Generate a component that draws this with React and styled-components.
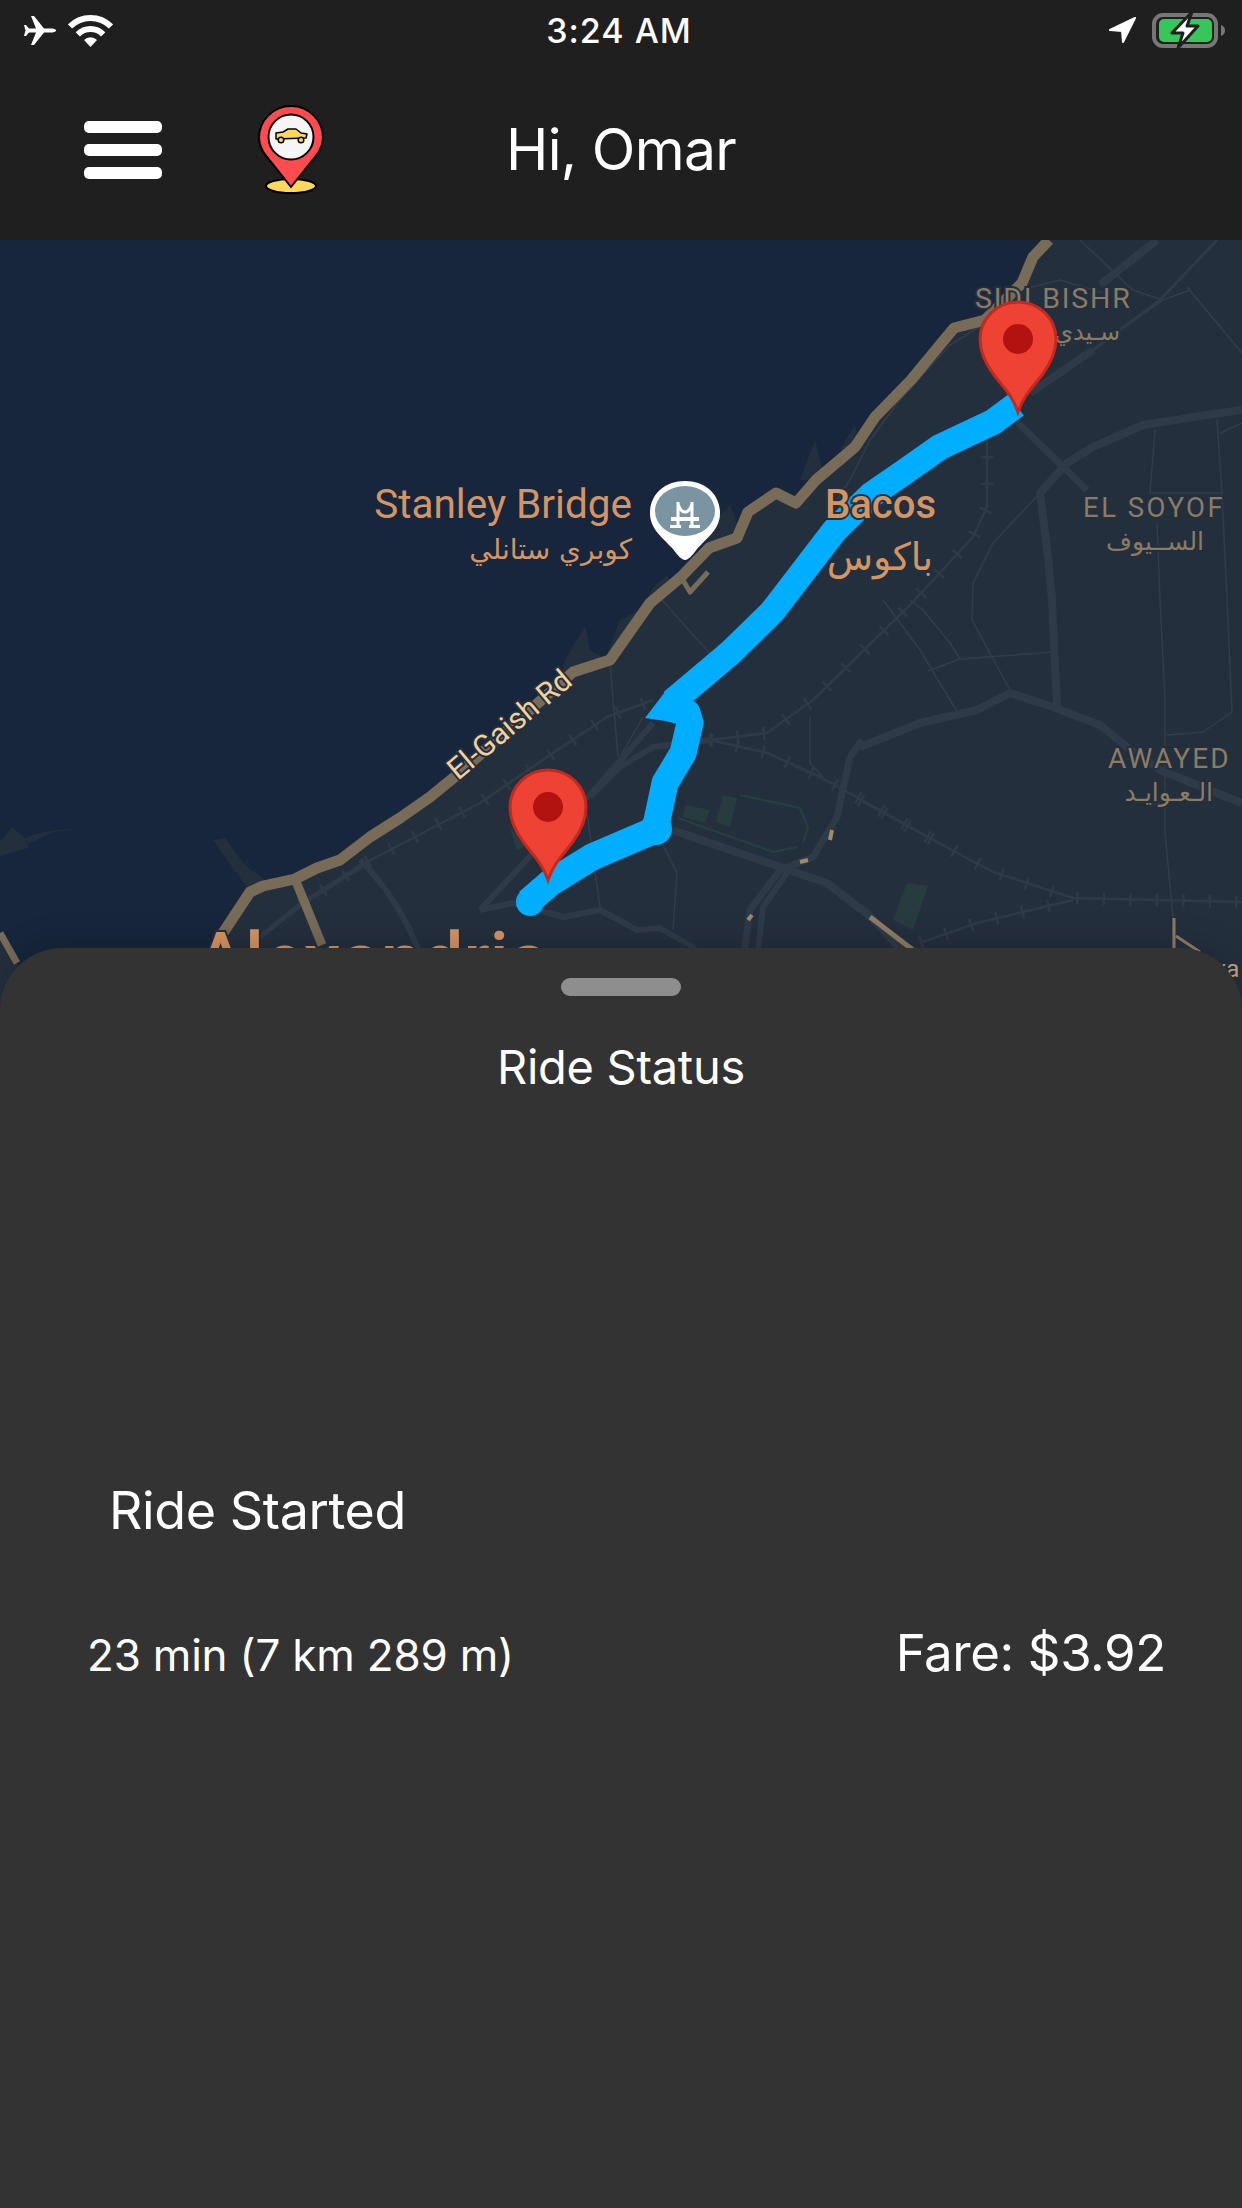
import React from "react";
import styled, { createGlobalStyle } from "styled-components";

const GlobalStyle = createGlobalStyle`
  html, body {
    margin: 0;
    padding: 0;
    background: #333333;
  }
  body {
    font-family: Inter, "Noto Sans", "Liberation Sans", sans-serif;
    color: #fff;
    -webkit-font-smoothing: antialiased;
  }
`;

const Screen = styled.div`
  width: 1242px;
  height: 2208px;
  display: flex;
  flex-direction: column;
  overflow: hidden;
`;

const StatusBar = styled.div`
  height: 60px;
  background: #1f1f1f;
  display: grid;
  grid-template-columns: 1fr auto 1fr;
  align-items: center;
  padding: 0 16px;
  box-sizing: border-box;
`;
const StatusGroup = styled.div`
  display: flex;
  align-items: center;
  gap: ${(p) => p.$gap || 12}px;
  justify-content: ${(p) => (p.$right ? "flex-end" : "flex-start")};
  padding-left: ${(p) => (p.$right ? 0 : 8)}px;
`;
const Clock = styled.div`
  font-size: 34px;
  font-weight: 500;
  letter-spacing: 1px;
  margin-left: -4px;
`;

const Header = styled.header`
  height: 180px;
  background: #1f1f1f;
  display: grid;
  grid-template-columns: 1fr auto 1fr;
  align-items: center;
`;
const HeaderLeft = styled.div`
  display: flex;
  align-items: center;
  gap: 96px;
  padding-left: 84px;
`;
const MenuButton = styled.div`
  width: 78px;
  display: flex;
  flex-direction: column;
  gap: 11px;
`;
const MenuBar = styled.span`
  display: block;
  height: 12px;
  border-radius: 5px;
  background: #fff;
`;
const Greeting = styled.div`
  font-size: 57px;
  line-height: 60px;
  font-weight: 400;
  letter-spacing: -0.7px;
`;

const MapPanel = styled.div`
  height: 770px;
  background: #17263c;
`;
const MapSvg = styled.svg`
  display: block;
  width: 1242px;
  height: 770px;
  font-family: Roboto, "DejaVu Sans", sans-serif;
`;
const Road = styled.path`
  fill: none;
  stroke: ${(p) => p.$color || "#2f3a48"};
  stroke-width: ${(p) => p.$w || 6}px;
  stroke-linejoin: round;
  stroke-dasharray: ${(p) => p.$dash || "none"};
`;
const Label = styled.text`
  fill: ${(p) => p.$color || "#8c7b63"};
  font-size: ${(p) => p.$size || 28}px;
  font-weight: ${(p) => p.$weight || 400};
  letter-spacing: ${(p) => p.$spacing || 0}px;
  text-anchor: ${(p) => p.$anchor || "start"};
  stroke: ${(p) => p.$halo || "#242f3e"};
  stroke-width: 4px;
  paint-order: stroke;
`;
const ArabicLabel = styled(Label)`
  font-family: "DejaVu Sans", sans-serif;
  direction: rtl;
`;

const Sheet = styled.section`
  position: relative;
  flex: 1;
  margin-top: -62px;
  background: #333333;
  border-radius: 62px 62px 0 0;
  box-shadow: 0 -8px 30px rgba(0, 0, 0, 0.16);
  padding-top: 30px;
  display: flex;
  flex-direction: column;
`;
const Handle = styled.div`
  width: 120px;
  height: 18px;
  border-radius: 9px;
  background: #8e8e8e;
  align-self: center;
`;
const SheetTitle = styled.div`
  margin-top: 46px;
  text-align: center;
  font-size: 47px;
  line-height: 50px;
  letter-spacing: -0.3px;
`;
const RideState = styled.div`
  margin: 389px 0 0 109px;
  font-size: 52px;
  line-height: 60px;
  letter-spacing: -0.4px;
`;
const TripRow = styled.div`
  margin-top: 82px;
  padding: 0 76px 0 87px;
  display: flex;
  justify-content: space-between;
  align-items: baseline;
  line-height: 60px;
`;
const Duration = styled.div`
  font-size: 44px;
  letter-spacing: -0.2px;
`;
const Fare = styled.div`
  font-size: 51px;
  letter-spacing: -0.4px;
`;

const AirplaneIcon = () => (
  <svg width="32" height="29" viewBox="0 0 32 29">
    <path fill="#fff" d="M32 14.5C32 13 29 12.5 27 12.5L20 12.5 10 0 7 0 12 12.5 5 12.5 2 9 0 9 1.5 14.5 0 20 2 20 5 16.5 12 16.5 7 29 10 29 20 16.5 27 16.5C29 16.5 32 16 32 14.5Z" />
  </svg>
);

const WifiIcon = () => (
  <svg width="45" height="33" viewBox="0 0 45 33">
    <path fill="none" stroke="#fff" strokeWidth="6" d="M2 12.5A29 29 0 0 1 43 12.5" />
    <path fill="none" stroke="#fff" strokeWidth="6" d="M9.8 20.3A18 18 0 0 1 35.2 20.3" />
    <path fill="#fff" d="M22.5 33L16 26A9 9 0 0 1 29 26Z" />
  </svg>
);

const LocationIcon = () => (
  <svg width="28" height="26" viewBox="0 0 28 26">
    <path fill="#fff" stroke="#fff" strokeWidth="2" strokeLinejoin="round" d="M27 1L2 13 14 14 15 25Z" />
  </svg>
);

const BatteryIcon = () => (
  <svg width="74" height="36" viewBox="0 0 74 36">
    <rect x="2" y="3" width="62" height="31" rx="9" fill="none" stroke="#777" strokeWidth="4" />
    <path fill="#777" d="M69 13C72 14 73 16 73 18.500S72 23 69 24Z" />
    <rect x="7" y="7" width="53" height="23" rx="5" fill="#35c759" />
    <path fill="#fff" stroke="#1f1f1f" strokeWidth="3" strokeLinejoin="round" d="M40 0L20 21 31 21 26 36 46 14 35 14Z" />
  </svg>
);

const AppLogo = () => (
  <svg width="66" height="90" viewBox="0 0 66 90">
    <ellipse cx="33" cy="81" rx="25" ry="7" fill="#ffd75a" stroke="#000" strokeWidth="2" />
    <path fill="#ff4b4f" stroke="#000" strokeWidth="2" d="M33 82L13 57C7 50 1 43 1 33A32 32 0 0 1 65 33C65 43 59 50 53 57Z" />
    <circle cx="33" cy="32" r="22.500" fill="#f5f5f5" stroke="#000" strokeWidth="2" />
    <path fill="#ffd75a" stroke="#000" strokeWidth="1.500" strokeLinejoin="round" d="M18 28L25 27 30 24 38 24 43 28 49 29 48 33 18 34Z" />
    <circle cx="23" cy="35" r="2.800" fill="#ffd75a" stroke="#000" strokeWidth="1.500" />
    <circle cx="43" cy="35" r="2.800" fill="#ffd75a" stroke="#000" strokeWidth="1.500" />
  </svg>
);

const Pin = ({ x, y }) => (
  <g transform={`translate(${x} ${y})`}>
    <path fill="#ee4235" stroke="#c5291e" strokeWidth="3" d="M-38 0A38 37 0 1 1 38 0C38 14 30 28 24 36 14 49 6 56 0 73-6 56-14 49-24 36-30 28-38 14-38 0Z" />
    <circle r="15" fill="#b21210" />
  </g>
);

const BridgeMarker = () => (
  <g>
    <path fill="#fff" d="M650 513C650 494 665 481 685 481 705 481 720 494 720 513 720 529 708 537 697 549 692 556 688 560 685 560 682 560 678 556 673 549 662 537 650 529 650 513Z" />
    <ellipse cx="685" cy="511" rx="30" ry="25" fill="#7a94a1" />
    <path fill="none" stroke="#fff" strokeWidth="3" d="M678 502V525M692 502V525M678 504C680 510 683 512 685 512 687 512 690 510 692 504" />
    <path fill="#fff" d="M671 517H699V521H671ZM670 525H681V528H670ZM689 525H700V528H689Z" />
  </g>
);

const roads = [
  ["M860 747 920 723 977 710 1010 693 1053 707 1100 725 1127 747 1160 770 1242 803", 8],
  ["M862 740 850 757 837 817 813 857 780 870 750 910 743 960", 7],
  ["M787 873 763 907 757 960", 6],
  ["M672 830 780 867 827 883 871 917 911 960", 8],
  ["M1242 410 1193 417 1143 425 1093 447 1067 463 1040 493 1048 557 1052 600 1057 707", 8],
  ["M1017 422 1087 490", 7],
  ["M1030 393 1093 350", 8],
  ["M1093 350 1160 300 1217 240", 3],
  ["M1100 285 1157 240", 8],
  ["M480 910 533 853 597 787 653 723", 6],
  ["M590 797 620 767 653 747 710 740", 6],
  ["M480 910 513 903 563 917 600 910 637 930 660 928 693 947 700 960", 6],
  ["M250 945 300 905 367 862 353 872", 5],
  ["M360 860C390 890 410 925 422 960", 6],
];

const thinRoads = [
  "M1080 240 1133 290 1163 300",
  "M1187 287 1242 353",
  "M1220 433 1242 423",
  "M1217 420 1222 493 1227 600 1232 712 1203 732 1167 735",
  "M1155 430 1150 493 1222 493",
  "M1040 493 993 543 973 583 972 620 1010 690",
  "M1157 523 1160 600 1165 700 1165 833 1173 917 1173 960",
  "M883 600 920 650 932 670 958 713",
  "M928 671 960 659 1053 652",
  "M910 600 923 610 950 643 960 659",
  "M610 663 618 757",
  "M662 600 713 657",
  "M587 813 600 907",
  "M662 843 677 873 673 930",
  "M643 717 620 757",
  "M810 717 810 763 823 777",
  "M990 320 950 345 900 400 870 440 850 480 830 510",
  "M1020 290 1060 280 1110 295",
  "M1190 290 1163 300 1100 345",
];

const rails = [
  "M860 800 937 842 993 872 1073 898 1242 902",
  "M920 943 977 923 1073 900",
  "M300 905 367 862 480 803 547 757 607 717 653 700",
  "M710 740 767 733 813 700 857 657 910 605 973 537 987 507 987 440",
  "M710 740 767 753 820 777 862 800 937 842",
];

const coast = "M223 933 250 892 263 886 295 879 317 868 340 860 370 837 400 818 430 797 457 775 573 672 610 660 650 603 681 577 709 548 737 538 748 512 776 493 796 503 816 480 855 447 875 417 911 380 954 328 985 320 1022 283 1033 257 1049 240";

const MapView = () => (
  <MapPanel>
    <MapSvg viewBox="0 240 1242 770">
      <path fill="#242f3e" d={`${coast} 1242 240 1242 1010 200 1010Z`} />
      <path fill="#242f3e" d="M0 935 17 963 40 1010 0 1010Z" />
      <path fill="#242f3e" d="M0 842 12 827 25 838 28 848 0 856ZM25 838C45 830 60 830 75 829L50 833 28 844Z" />
      <path fill="#242f3e" d="M213 840 225 838 245 865 265 880 250 892Z" />
      <path fill="#242f3e" d="M560 680C565 650 580 640 585 625L590 650 610 662 575 675ZM605 660 620 620 650 605 615 660ZM640 610 655 585 668 575 670 590ZM700 560 715 520 730 505 740 530ZM800 480 815 440 825 480ZM840 450 855 425 860 450Z" />

      {thinRoads.map((d) => (
        <Road key={d} d={d} $w={1.500} $color="#323d4b" />
      ))}
      {roads.map(([d, w]) => (
        <Road key={d} d={d} $w={w} />
      ))}
      {rails.map((d) => (
        <g key={d}>
          <Road d={d} $w={2.500} />
          <Road d={d} $w={13} $dash="2.500 24" />
        </g>
      ))}

      <path fill="#263c3f" d="M685 805 710 810 705 823 683 817ZM723 795 737 798 730 827 716 822ZM508 823 525 847 517 850ZM907 883 928 886 913 930 893 920Z" />
      <Road d="M740 795 800 808 808 827 803 843" $w={2} $color="#26403f" />
      <Road d="M678 818 773 852 797 847" $w={2} $color="#26403f" />

      <Road d={coast} $w={11} $color="#786b58" />
      <Road d="M681 577 690 592 708 572" $w={5} $color="#786b58" />
      <Road d="M295 879 322 945" $w={9} $color="#786b58" />
      <Road d="M0 933 17 963" $w={7} $color="#786b58" />
      <Road d="M870 917 913 950" $w={5} $color="#8d7d66" />
      <Road d="M1174 918 1174 948M1176 936 1200 952" $w={3} $color="#8d7d66" />
      <Road d="M832 830 830 840M800 862 808 860M748 920 752 915" $w={4} $color="#a08a68" />
      <circle cx="497" cy="935" r="4.500" fill="#d59563" />

      <BridgeMarker />

      <Road d="M528 902 550 883 592 857 655 830 665 783 683 753 690 723 687 713 670 708" $w={27} $color="#00aeff" />
      <Road d="M672 702 730 653 772 612 835 530 871 495 903 473 940 447 993 422 1016 405" $w={26} $color="#00aeff" />
      <path fill="#00aeff" d="M645 718 668 688 690 706 672 722Z" />
      <circle cx="656" cy="829" r="16" fill="#00aeff" />
      <circle cx="530" cy="902" r="14" fill="#00aeff" />

      <Label x="632" y="518" $size={40.500} $color="#d59563" $anchor="end" $halo="#17263c">Stanley Bridge</Label>
      <ArabicLabel x="632" y="559" $size={28} $color="#d59563" $anchor="start" $halo="#17263c">كوبري ستانلي</ArabicLabel>
      <Label x="825" y="518" $size={40} $weight={500} $color="#d59563">Bacos</Label>
      <ArabicLabel x="933" y="570" $size={38} $color="#d59563" $anchor="start">باكوس</ArabicLabel>
      <Label x="975" y="308" $size={28.500} $spacing={1.800}>SIDI BISHR</Label>
      <ArabicLabel x="1120" y="340" $size={24} $anchor="start">سـيدي</ArabicLabel>
      <Label x="1083" y="517" $size={27.500} $spacing={2.500}>EL SOYOF</Label>
      <ArabicLabel x="1204" y="550" $size={25} $anchor="start">الســيوف</ArabicLabel>
      <Label x="1108" y="768" $size={28} $spacing={2.200}>AWAYED</Label>
      <ArabicLabel x="1213" y="801" $size={25} $anchor="start">الـعـوايـد</ArabicLabel>
      <Label transform="translate(458 781) rotate(-40)" $size={30} $color="#f3d19c">El-Gaish Rd</Label>
      <Label x="196" y="985" $size={74} $weight={500} $color="#d59563">Alexandria</Label>
      <Label x="1180" y="977" $size={24} $color="#c9a878">Alexa</Label>

      <Pin x={1018} y={339} />
      <Pin x={548} y={807} />
    </MapSvg>
  </MapPanel>
);

export default function App() {
  return (
    <Screen>
      <GlobalStyle />
      <StatusBar>
        <StatusGroup>
          <AirplaneIcon />
          <WifiIcon />
        </StatusGroup>
        <Clock>3:24 AM</Clock>
        <StatusGroup $right $gap={16}>
          <LocationIcon />
          <BatteryIcon />
        </StatusGroup>
      </StatusBar>
      <Header>
        <HeaderLeft>
          <MenuButton>
            <MenuBar />
            <MenuBar />
            <MenuBar />
          </MenuButton>
          <AppLogo />
        </HeaderLeft>
        <Greeting>Hi, Omar</Greeting>
        <span />
      </Header>
      <MapView />
      <Sheet>
        <Handle />
        <SheetTitle>Ride Status</SheetTitle>
        <RideState>Ride Started</RideState>
        <TripRow>
          <Duration>23 min (7 km 289 m)</Duration>
          <Fare>Fare: $3.92</Fare>
        </TripRow>
      </Sheet>
    </Screen>
  );
}
